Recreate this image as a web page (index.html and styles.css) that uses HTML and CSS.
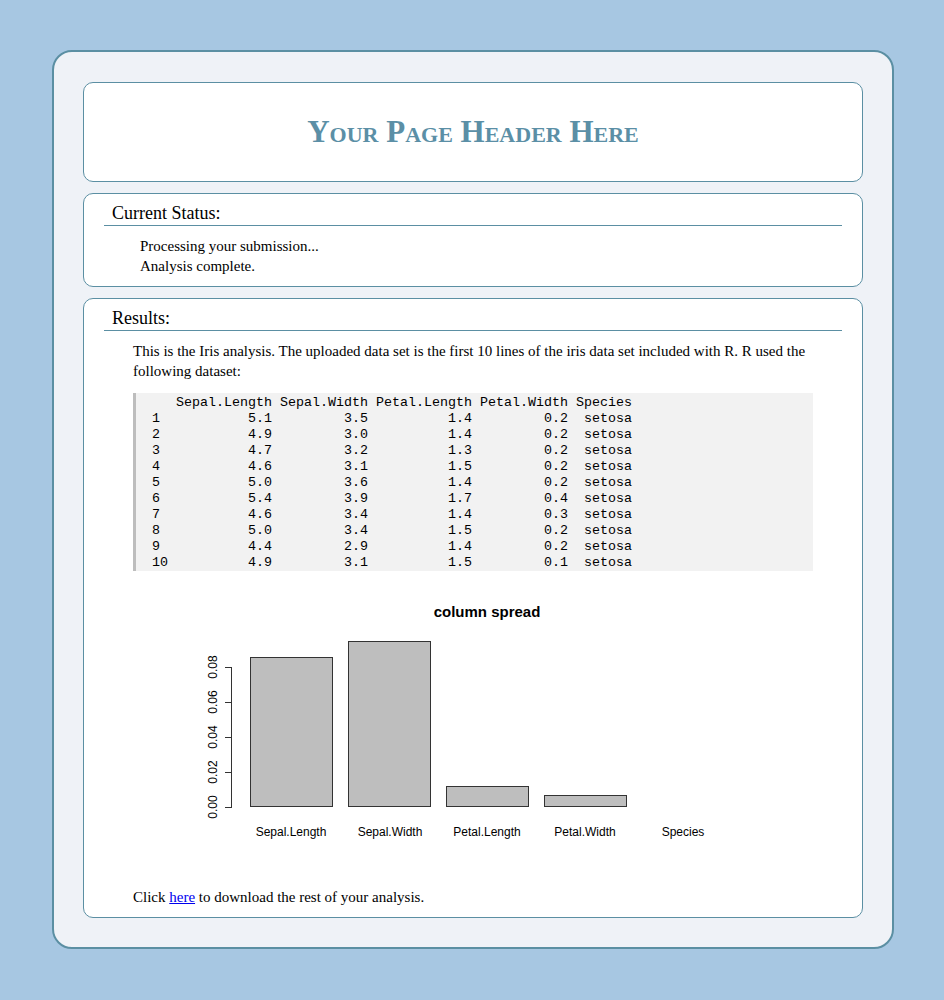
FILE: index.html
```
<!DOCTYPE html>
<html>
<head>
<meta charset="utf-8">
<title>Results</title>
<link rel="stylesheet" href="styles.css">
</head>
<body>
<div class="page">
  <div class="box header-box">
    <h1 class="title">Your Page Header Here</h1>
  </div>
  <div class="box">
    <h2 class="section-title">Current Status:</h2>
    <div class="status">
      <div>Processing your submission...</div>
      <div>Analysis complete.</div>
    </div>
  </div>
  <div class="box">
    <h2 class="section-title">Results:</h2>
    <div class="results">
      <p class="intro">This is the Iris analysis. The uploaded data set is the first 10 lines of the iris data set included with R. R used the following dataset:</p>
<pre class="data">   Sepal.Length Sepal.Width Petal.Length Petal.Width Species
1           5.1         3.5          1.4         0.2  setosa
2           4.9         3.0          1.4         0.2  setosa
3           4.7         3.2          1.3         0.2  setosa
4           4.6         3.1          1.5         0.2  setosa
5           5.0         3.6          1.4         0.2  setosa
6           5.4         3.9          1.7         0.4  setosa
7           4.6         3.4          1.4         0.3  setosa
8           5.0         3.4          1.5         0.2  setosa
9           4.4         2.9          1.4         0.2  setosa
10          4.9         3.1          1.5         0.1  setosa</pre>
      <svg class="chart" width="680" height="290" viewBox="0 0 680 290" xmlns="http://www.w3.org/2000/svg">
        <text x="354" y="37" class="chart-title" text-anchor="middle">column spread</text>
        <g fill="#bebebe" stroke="#333" stroke-width="1">
          <rect x="117.5" y="77.5" width="82" height="149"/>
          <rect x="215.5" y="61.5" width="82" height="165"/>
          <rect x="313.5" y="206.5" width="82" height="20"/>
          <rect x="411.5" y="215.5" width="82" height="11"/>
        </g>
        <g stroke="#333" stroke-width="1" fill="none">
          <path d="M98.5 87 V227"/>
          <path d="M92 227.5 H99 M92 192.5 H99 M92 157.5 H99 M92 122.5 H99 M92 87.5 H99"/>
        </g>
        <g class="tick" text-anchor="middle">
          <text transform="translate(84 227) rotate(-90)">0.00</text>
          <text transform="translate(84 192) rotate(-90)">0.02</text>
          <text transform="translate(84 157) rotate(-90)">0.04</text>
          <text transform="translate(84 122) rotate(-90)">0.06</text>
          <text transform="translate(84 87) rotate(-90)">0.08</text>
        </g>
        <g class="tick" text-anchor="middle">
          <text x="158" y="256">Sepal.Length</text>
          <text x="257" y="256">Sepal.Width</text>
          <text x="354" y="256">Petal.Length</text>
          <text x="452" y="256">Petal.Width</text>
          <text x="550" y="256">Species</text>
        </g>
      </svg>
      <p class="download">Click <a href="#">here</a> to download the rest of your analysis.</p>
    </div>
  </div>
</div>
</body>
</html>
```
FILE: styles.css
```
html, body {
  margin: 0;
  padding: 0;
}
body {
  background: #a7c7e2;
  font-family: "Liberation Serif", "Times New Roman", serif;
  font-size: 15px;
  color: #000;
  padding-top: 50px;
  padding-bottom: 50px;
}
.page {
  box-sizing: border-box;
  width: 842px;
  margin-left: 52px;
  background: #eff2f7;
  border: 2px solid #5b8fa3;
  border-radius: 20px;
  padding: 30px 29px 29px 29px;
  display: flex;
  flex-direction: column;
  gap: 11px;
}
.box {
  background: #fff;
  border: 1px solid #5b8fa3;
  border-radius: 10px;
  padding: 0 20px;
}
.header-box {
  height: 98px;
  display: flex;
  align-items: center;
  justify-content: center;
}
.title {
  margin: 0;
  font-variant: small-caps;
  font-weight: bold;
  font-size: 31px;
  color: #5b8fa6;
}
.section-title {
  margin: 0;
  font-weight: normal;
  font-size: 18px;
  line-height: 20px;
  padding: 9px 0 2px 8px;
  border-bottom: 1px solid #5b8fa3;
}
.status {
  padding: 10px 0 10px 36px;
  line-height: 20px;
}
.results {
  padding: 10px 29px 0 29px;
}
.intro {
  margin: 0;
  line-height: 20px;
}
.data {
  margin: 12px 0 0 0;
  background: #f2f2f2;
  border-left: 3px solid #bdbdbd;
  padding: 2px 0 0 16px;
  font-family: "Liberation Mono", "Courier New", monospace;
  font-size: 13.33px;
  line-height: 16px;
}
.chart {
  display: block;
  margin-top: 9px;
}
.chart-title {
  font-family: "Liberation Sans", Arial, sans-serif;
  font-weight: bold;
  font-size: 15px;
}
.tick {
  font-family: "Liberation Sans", Arial, sans-serif;
  font-size: 12px;
}
.download {
  margin: 17px 0 0 0;
  padding-bottom: 10px;
  line-height: 20px;
}
.download a {
  color: #0000ee;
}
```
